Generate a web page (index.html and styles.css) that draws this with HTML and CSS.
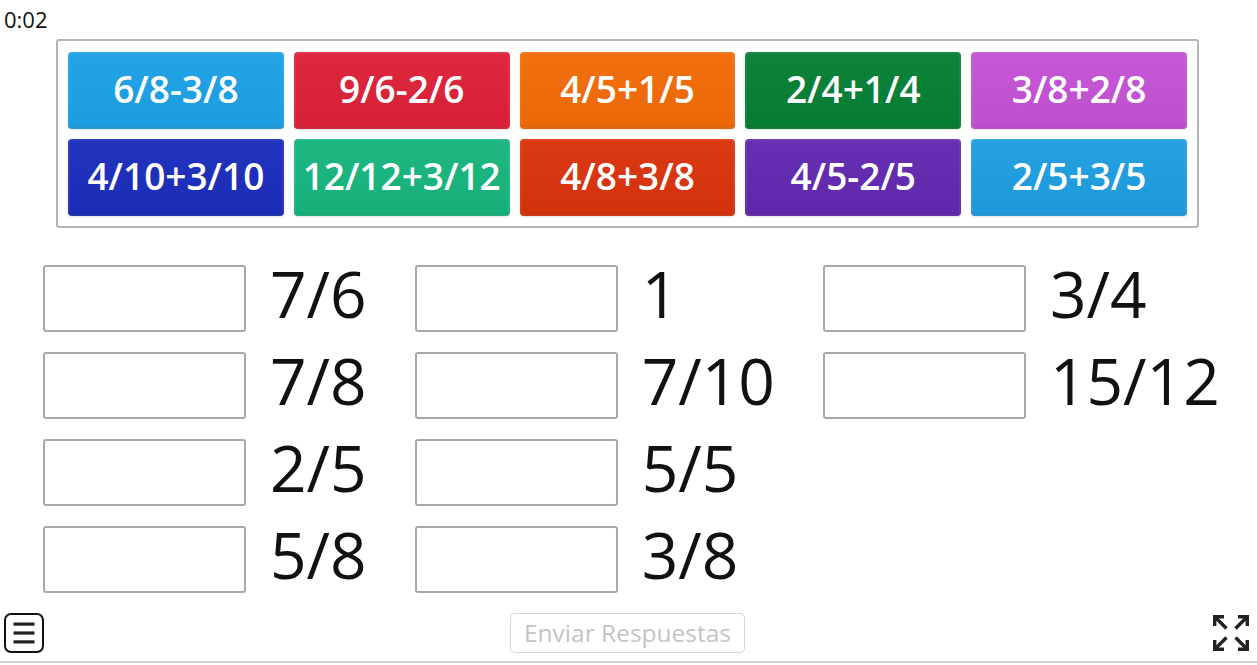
FILE: index.html
```html
<!DOCTYPE html>
<html lang="es">
<head>
<meta charset="utf-8">
<title>Match up</title>
<link rel="stylesheet" href="styles.css">
</head>
<body>
<div class="page">
  <div class="timer">0:02</div>
  <div class="board">
    <div class="tile c1">6/8-3/8</div>
    <div class="tile c2">9/6-2/6</div>
    <div class="tile c3">4/5+1/5</div>
    <div class="tile c4">2/4+1/4</div>
    <div class="tile c5">3/8+2/8</div>
    <div class="tile c6">4/10+3/10</div>
    <div class="tile c7">12/12+3/12</div>
    <div class="tile c8">4/8+3/8</div>
    <div class="tile c9">4/5-2/5</div>
    <div class="tile c10">2/5+3/5</div>
  </div>
  <div class="answers">
    <div class="col">
      <div class="row"><div class="slot"></div><span class="label">7/6</span></div>
      <div class="row"><div class="slot"></div><span class="label">7/8</span></div>
      <div class="row"><div class="slot"></div><span class="label">2/5</span></div>
      <div class="row"><div class="slot"></div><span class="label">5/8</span></div>
    </div>
    <div class="col">
      <div class="row"><div class="slot"></div><span class="label">1</span></div>
      <div class="row"><div class="slot"></div><span class="label">7/10</span></div>
      <div class="row"><div class="slot"></div><span class="label">5/5</span></div>
      <div class="row"><div class="slot"></div><span class="label">3/8</span></div>
    </div>
    <div class="col">
      <div class="row"><div class="slot"></div><span class="label">3/4</span></div>
      <div class="row"><div class="slot"></div><span class="label">15/12</span></div>
    </div>
  </div>
  <div class="footer">
    <div class="menu-btn">
      <svg width="40" height="40" viewBox="0 0 40 40">
        <rect x="1" y="1" width="38" height="38" rx="6" ry="6" fill="none" stroke="#111" stroke-width="2"/>
        <rect x="9.5" y="9.5" width="21" height="3.2" fill="#222"/>
        <rect x="9.5" y="18.4" width="21" height="3.2" fill="#222"/>
        <rect x="9.5" y="27.3" width="21" height="3.2" fill="#222"/>
      </svg>
    </div>
    <button class="submit">Enviar Respuestas</button>
    <div class="fs-btn">
      <svg width="36" height="36" viewBox="0 0 36 36">
        <g fill="#222" stroke="#222" stroke-width="3.4" stroke-linejoin="miter">
          <path d="M1.7 11 V1.7 H11" fill="none"/>
          <path d="M2 2 L13.5 13.5" fill="none"/>
          <path d="M34.3 11 V1.7 H25" fill="none"/>
          <path d="M34 2 L22.5 13.5" fill="none"/>
          <path d="M1.7 25 V34.3 H11" fill="none"/>
          <path d="M2 34 L13.5 22.5" fill="none"/>
          <path d="M34.3 25 V34.3 H25" fill="none"/>
          <path d="M34 34 L22.5 22.5" fill="none"/>
        </g>
      </svg>
    </div>
  </div>
  <div class="rule"></div>
</div>
</body>
</html>
```

FILE: styles.css
```css
* { box-sizing: border-box; }
html, body { margin: 0; padding: 0; background: #fff; }
body {
  font-family: "Open Sans", "Noto Sans", sans-serif;
  color: #111;
}
.page {
  width: 1257px;
  height: 665px;
  display: flex;
  flex-direction: column;
}
.timer {
  height: 39px;
  padding: 4px 0 0 4px;
  font-size: 22px;
  line-height: 30px;
  color: #111;
}
.board {
  margin-left: 56px;
  width: 1143px;
  border: 2px solid #b5b5b5;
  border-radius: 3px;
  padding: 11px 10px 10px 10px;
  display: grid;
  grid-template-columns: repeat(5, 1fr);
  grid-auto-rows: 77px;
  gap: 10px;
}
.tile {
  border-radius: 4px;
  color: #fff;
  font-size: 37px;
  font-weight: 600;
  display: flex;
  align-items: center;
  justify-content: center;
  padding-bottom: 5px;
  white-space: nowrap;
  box-shadow: inset 0 0 0 2px rgba(255,255,255,0.06), inset 0 -3px 0 rgba(0,0,0,0.05), 0 1px 2px rgba(0,0,0,0.12);
  background-image: linear-gradient(rgba(255,255,255,0.03), rgba(0,0,0,0.03));
}
.c1 { background-color: #1ca1e5; }
.c2 { background-color: #dc2138; }
.c3 { background-color: #f26b08; }
.c4 { background-color: #067f34; }
.c5 { background-color: #c452d6; }
.c6 { background-color: #1b2dbb; }
.c7 { background-color: #17b57d; }
.c8 { background-color: #d9330c; }
.c9 { background-color: #6229b0; }
.c10 { background-color: #1e9de0; }

.answers {
  margin: 37px 0 0 43px;
  display: flex;
  gap: 48px;
  align-items: flex-start;
}
.col {
  display: flex;
  flex-direction: column;
  gap: 20px;
}
.row {
  display: flex;
  align-items: center;
  gap: 24px;
  height: 67px;
}
.slot {
  width: 203px;
  height: 67px;
  border: 2px solid #a8a8a8;
  border-radius: 3px;
  background: #fff;
}
.label {
  font-size: 64px;
  line-height: 67px;
  padding-bottom: 11px;
  color: #111;
  white-space: nowrap;
}
.footer {
  margin-top: auto;
  height: 40px;
  padding: 0 8px 0 4px;
  display: flex;
  align-items: center;
  justify-content: space-between;
  position: relative;
}
.menu-btn, .fs-btn { display: flex; }
.submit {
  position: absolute;
  left: 510px;
  top: 0;
  width: 235px;
  height: 40px;
  border: 1px solid #d6d6d6;
  border-radius: 5px;
  background: #fff;
  color: #c4c4c4;
  font-family: "Open Sans", "Noto Sans", sans-serif;
  font-size: 24.5px;
  padding: 0 0 2px 0;
}
.rule {
  margin-top: 8px;
  height: 2px;
  background: #d2d2d2;
  margin-bottom: 2px;
}
```
